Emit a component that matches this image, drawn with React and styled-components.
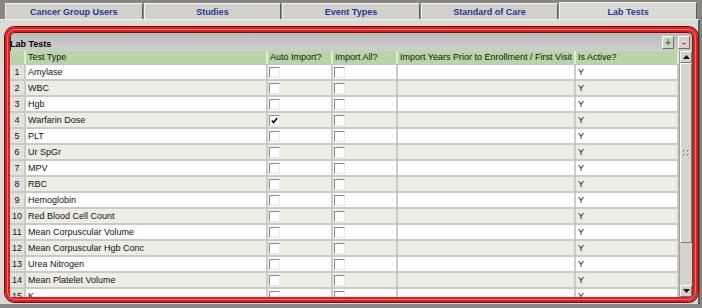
import React from 'react';
import styled, { createGlobalStyle } from 'styled-components';

const Global = createGlobalStyle`
  html, body { margin: 0; padding: 0; background: #868686; }
  body { font-family: "Liberation Sans", Arial, sans-serif; }
`;

const Page = styled.div`
  width: 702px;
  height: 308px;
  overflow: hidden;
  background: #868686;
  display: flex;
  flex-direction: column;
`;

const TabBar = styled.div`
  display: flex;
  align-items: flex-end;
  gap: 1px;
  height: 19px;
  box-sizing: border-box;
  padding: 0 5px;
`;

const Tab = styled.div`
  flex: 1;
  height: ${p => (p.$active ? '17px' : '16px')};
  box-sizing: border-box;
  background: ${p => (p.$active ? '#dcdad5' : '#d3d0ca')};
  border-top: 1px solid #f2f2f2;
  border-left: 1px solid #f2f2f2;
  border-right: 1px solid #5c5c5c;
  display: flex;
  align-items: center;
  justify-content: center;
  font: bold 9px "Liberation Sans", Arial, sans-serif;
  color: #1c3a9c;
  padding-top: ${p => (p.$active ? '1px' : '0')};
`;

const Panel = styled.div`
  width: 700px;
  height: 285px;
  box-sizing: border-box;
  background: #dcdad5;
  border-top: 1px solid #f0f0f0;
  border-right: 2px solid #5e5e5e;
  padding: 7px 1px 0 5px;
`;

const Frame = styled.div`
  position: relative;
  width: 693px;
  height: 275px;
  box-sizing: border-box;
  border: 5px solid #e21d1d;
  border-radius: 10px;
  background: linear-gradient(#b9b9b9, #cdcdcd 18px, #c9c9c9);
  box-shadow: 0 0 0 1px #5e1414, inset 0 0 0 1px #4a2020;
  display: flex;
  flex-direction: column;
  &::after {
    content: '';
    position: absolute;
    inset: -3px;
    border: 1px solid rgba(255, 130, 130, 0.85);
    border-radius: 8px;
    pointer-events: none;
  }
`;

const TitleBar = styled.div`
  height: 19px;
  flex: none;
  display: flex;
  align-items: center;
  gap: 4px;
  padding-right: 3px;
`;

const Title = styled.div`
  flex: 1;
  font: bold 9px "Liberation Sans", Arial, sans-serif;
  color: #000;
  padding-top: 4px;
`;

const ToolButton = styled.div`
  width: 12px;
  height: 13px;
  box-sizing: border-box;
  background: #d4d1cb;
  border-top: 1px solid #ffffff;
  border-left: 1px solid #ffffff;
  border-right: 1px solid #6e6e6e;
  border-bottom: 1px solid #6e6e6e;
  display: flex;
  align-items: center;
  justify-content: center;
  font: bold 11px "Liberation Sans", Arial, sans-serif;
  line-height: 1;
  color: ${p => p.$color};
  margin-top: 1px;
`;

const GridWrap = styled.div`
  flex: 1;
  display: flex;
  min-height: 0;
`;

const TableArea = styled.div`
  width: 669px;
  overflow: hidden;
  background: #fff;
`;

const cols = '16px 242px 65px 65px 178px 103px';

const HeaderRow = styled.div`
  display: grid;
  grid-template-columns: ${cols};
  height: 13px;
  background: #bad4a6;
  border-bottom: 1px solid #c2c2c2;
  box-sizing: content-box;
`;

const HeaderCell = styled.div`
  box-sizing: border-box;
  border-right: 2px solid #e3ebdc;
  font: 9px "Liberation Sans", Arial, sans-serif;
  color: #111;
  padding-left: 2px;
  line-height: 13px;
  white-space: nowrap;
  overflow: hidden;
`;

const Row = styled.div`
  display: grid;
  grid-template-columns: ${cols};
  height: 16px;
  box-sizing: border-box;
  background: ${p => (p.$even ? '#eeede2' : '#ffffff')};
  border-bottom: 2px solid #c9c9c9;
`;

const Cell = styled.div`
  box-sizing: border-box;
  border-right: 2px solid #cacaca;
  font: 9px "Liberation Sans", Arial, sans-serif;
  color: #111;
  padding-left: 2px;
  line-height: 14px;
  white-space: nowrap;
  overflow: hidden;
`;

const NumCell = styled(Cell)`
  background: #e2e1dc;
  padding-left: 0;
  text-align: center;
`;

const BoxCell = styled(Cell)`
  padding-left: 1px;
  padding-top: 2px;
`;

const CheckBox = styled.div`
  width: 11px;
  height: 11px;
  box-sizing: border-box;
  background: #fff;
  border-top: 1px solid #8a8a8a;
  border-left: 1px solid #8a8a8a;
  border-right: 1px solid #e8e8e8;
  border-bottom: 1px solid #e8e8e8;
  display: flex;
  align-items: center;
  justify-content: center;
`;

const ScrollBar = styled.div`
  width: 14px;
  flex: none;
  box-sizing: border-box;
  background: #d6d3cd;
  border-left: 1px solid #9a9a9a;
  border-right: 1px solid #4e4e4e;
  display: flex;
  flex-direction: column;
`;

const ScrollButton = styled.div`
  height: 12px;
  flex: none;
  box-sizing: border-box;
  background: #d4d1cb;
  border-top: 1px solid #ffffff;
  border-left: 1px solid #ffffff;
  border-right: 1px solid #707070;
  border-bottom: 1px solid #707070;
  display: flex;
  align-items: center;
  justify-content: center;
`;

const Thumb = styled.div`
  height: 180px;
  flex: none;
  box-sizing: border-box;
  background: #d8d5cf;
  border-top: 1px solid #ffffff;
  border-left: 1px solid #ffffff;
  border-right: 1px solid #7a7a7a;
  border-bottom: 1px solid #7a7a7a;
  display: flex;
  align-items: center;
  justify-content: center;
`;

const Track = styled.div`
  flex: 1;
`;

const Arrow = ({ up }) => (
  <svg width="7" height="4" viewBox="0 0 7 4">
    <polygon points={up ? '0,4 7,4 3.5,0' : '0,0 7,0 3.5,4'} fill="#111" />
  </svg>
);

const Grip = () => (
  <svg width="7" height="7" viewBox="0 0 7 7">
    {[[0, 0], [4, 0], [0, 4], [4, 4]].map(([x, y], i) => (
      <g key={i}>
        <rect x={x} y={y} width="2" height="2" fill="#8a8a8a" />
        <rect x={x + 1} y={y + 1} width="1" height="1" fill="#fff" />
      </g>
    ))}
  </svg>
);

const Check = () => (
  <svg width="7" height="7" viewBox="0 0 7 7">
    <polyline points="0.8,3.5 2.6,5.5 6.2,1" fill="none" stroke="#000" strokeWidth="1.5" />
  </svg>
);

const tabs = ['Cancer Group Users', 'Studies', 'Event Types', 'Standard of Care', 'Lab Tests'];

const rows = [
  ['Amylase', false],
  ['WBC', false],
  ['Hgb', false],
  ['Warfarin Dose', true],
  ['PLT', false],
  ['Ur SpGr', false],
  ['MPV', false],
  ['RBC', false],
  ['Hemoglobin', false],
  ['Red Blood Cell Count', false],
  ['Mean Corpuscular Volume', false],
  ['Mean Corpuscular Hgb Conc', false],
  ['Urea Nitrogen', false],
  ['Mean Platelet Volume', false],
  ['K', false],
];

export default function App() {
  return (
    <Page>
      <Global />
      <TabBar>
        {tabs.map(t => (
          <Tab key={t} $active={t === 'Lab Tests'}>{t}</Tab>
        ))}
      </TabBar>
      <Panel>
        <Frame>
          <TitleBar>
            <Title>Lab Tests</Title>
            <ToolButton $color="#18a018">+</ToolButton>
            <ToolButton $color="#e02020">-</ToolButton>
          </TitleBar>
          <GridWrap>
            <TableArea>
              <HeaderRow>
                <HeaderCell />
                <HeaderCell>Test Type</HeaderCell>
                <HeaderCell>Auto Import?</HeaderCell>
                <HeaderCell>Import All?</HeaderCell>
                <HeaderCell>Import Years Prior to Enrollment / First Visit</HeaderCell>
                <HeaderCell>Is Active?</HeaderCell>
              </HeaderRow>
              {rows.map(([name, auto], i) => (
                <Row key={i} $even={i % 2 === 1}>
                  <NumCell>{i + 1}</NumCell>
                  <Cell>{name}</Cell>
                  <BoxCell><CheckBox>{auto && <Check />}</CheckBox></BoxCell>
                  <BoxCell><CheckBox /></BoxCell>
                  <Cell />
                  <Cell>Y</Cell>
                </Row>
              ))}
            </TableArea>
            <ScrollBar>
              <ScrollButton><Arrow up /></ScrollButton>
              <Thumb><Grip /></Thumb>
              <Track />
              <ScrollButton><Arrow /></ScrollButton>
            </ScrollBar>
          </GridWrap>
        </Frame>
      </Panel>
    </Page>
  );
}
